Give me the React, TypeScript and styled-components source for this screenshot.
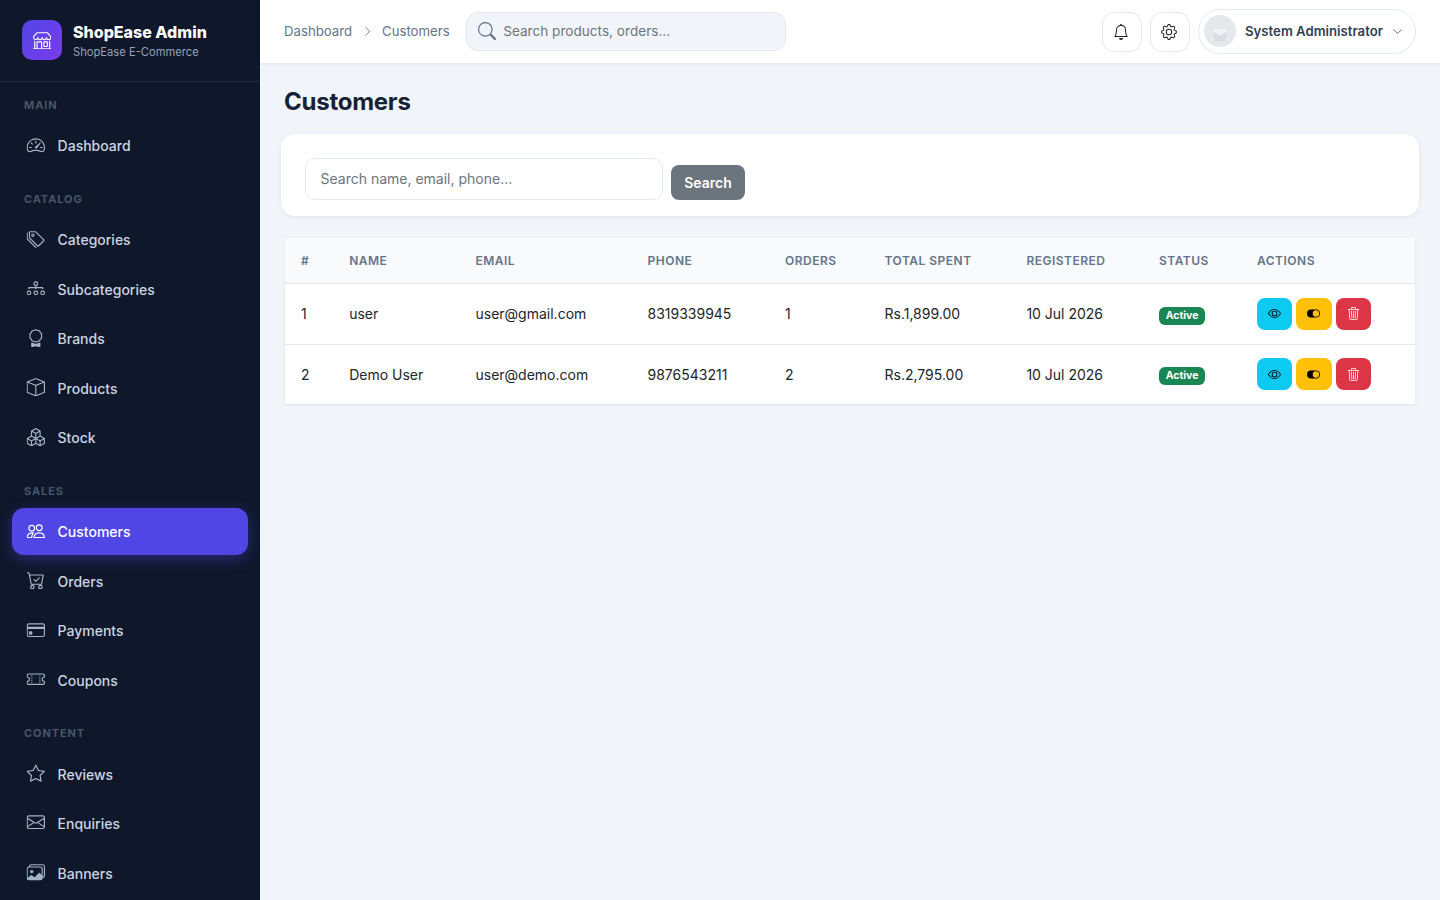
import React from 'react'
import styled, { createGlobalStyle } from 'styled-components'
import {
  BsShop, BsSpeedometer2, BsTags, BsDiagram3, BsAward, BsBox, BsBoxes, BsPeople,
  BsCartCheck, BsCreditCard, BsTicketPerforated, BsStar, BsEnvelope, BsImages,
  BsBell, BsGear, BsChevronDown, BsChevronRight, BsSearch, BsEye, BsToggleOn, BsTrash3,
} from 'react-icons/bs'

const GlobalStyle = createGlobalStyle`
  * { box-sizing: border-box; }
  html, body { margin: 0; height: 100%; overflow: hidden; }
  body {
    font-family: Inter, "Liberation Sans", sans-serif;
    background: #f1f5f9;
    color: #212529;
  }
`

const Shell = styled.div`
  display: flex;
  width: 1440px;
  height: 900px;
  overflow: hidden;
`

const Sidebar = styled.aside`
  flex: 0 0 260px;
  height: 900px;
  overflow: hidden;
  background: #0f172a;
`

const Brand = styled.div`
  display: flex;
  align-items: center;
  gap: 11px;
  height: 82px;
  padding: 0 22px 1px;
  border-bottom: 1px solid #1e293b;
`

const LogoMark = styled.div`
  display: flex;
  align-items: center;
  justify-content: center;
  width: 40px;
  height: 40px;
  border-radius: 10px;
  background: linear-gradient(135deg, #4f46e5, #7c3aed);
  color: #fff;
  font-size: 18.4px;
`

const BrandName = styled.div`
  margin-top: 1px;
  font-size: 16px;
  line-height: 20px;
  font-weight: 800;
  color: #fff;
`

const BrandSub = styled.div`
  font-size: 11.2px;
  line-height: 16px;
  margin-top: 2px;
  color: #94a3b8;
`

const Nav = styled.nav`
  padding: 16px 12px 0;
`

const SectionLabel = styled.div`
  height: 15.7px;
  margin: 0 12px 8.3px;
  font-size: 11px;
  line-height: 15.7px;
  font-weight: 700;
  letter-spacing: 0.9px;
  text-transform: uppercase;
  color: #475569;
`

const NavSection = styled.div`
  margin-bottom: 22.5px;
`

const NavItem = styled.a<{ $active?: boolean }>`
  display: flex;
  align-items: center;
  gap: 12.8px;
  height: 47.5px;
  margin-bottom: 2px;
  padding: 0 14.4px;
  border-radius: 12px;
  font-size: 14px;
  font-weight: 500;
  color: ${p => (p.$active ? '#fff' : '#cbd5e1')};
  background: ${p => (p.$active ? '#4f46e5' : 'transparent')};
  box-shadow: ${p => (p.$active ? '0 4px 15px rgba(79, 70, 229, 0.4)' : 'none')};
  svg {
    flex: 0 0 18.4px;
    width: 18.4px;
    height: 18.4px;
    color: ${p => (p.$active ? '#fff' : '#a3b3c9')};
    transform: translate(0.6px, -1px);
  }
`

const Main = styled.main`
  flex: 1;
  min-width: 0;
`

const Topbar = styled.header`
  display: flex;
  align-items: center;
  height: 63px;
  padding: 0 24px;
  background: #fff;
  box-shadow: 0 1px 3px rgba(15, 23, 42, 0.08);
`

const Crumbs = styled.div`
  display: flex;
  align-items: center;
  gap: 8.5px;
  padding-bottom: 1px;
  font-size: 13.2px;
  color: #64748b;
  svg { width: 11px; height: 11px; margin: 0 1px; }
`

const TopSearch = styled.div`
  display: flex;
  align-items: center;
  gap: 7px;
  width: 320px;
  height: 39px;
  margin-left: 16.5px;
  padding: 0 11px 1px;
  border: 1px solid #e2e8f0;
  border-radius: 12px;
  background: #f1f5f9;
  font-size: 13.6px;
  color: #6c757d;
  svg { width: 18px; height: 18px; color: #64748b; }
`

const TopActions = styled.div`
  display: flex;
  align-items: center;
  gap: 8px;
  margin-left: auto;
`

const IconButton = styled.button`
  display: flex;
  align-items: center;
  justify-content: center;
  width: 40px;
  height: 40px;
  padding: 0 2px 0 0;
  border: 1px solid #e2e8f0;
  border-radius: 12px;
  background: #fff;
  color: #212529;
  font-size: 16px;
`

const Profile = styled.div`
  display: flex;
  align-items: center;
  width: 218px;
  height: 45px;
  padding: 0 12px 1px 5px;
  border: 1px solid #e2e8f0;
  border-radius: 23px;
  font-size: 13.2px;
  font-weight: 600;
  color: #334155;
  svg.chev { width: 11px; height: 11px; margin-left: auto; color: #64748b; }
`

const Avatar = styled.div`
  display: flex;
  align-items: flex-end;
  justify-content: center;
  width: 32px;
  height: 32px;
  margin-right: 9px;
  padding-bottom: 6px;
  border-radius: 50%;
  background: #e5e7eb;
`

const Content = styled.div`
  padding: 24px;
`

const PageTitle = styled.h1`
  margin: 0 0 18px;
  font-size: 24px;
  line-height: 29px;
  font-weight: 700;
  letter-spacing: -0.25px;
  color: #172136;
`

const FilterCard = styled.form`
  display: flex;
  align-items: flex-end;
  gap: 8px;
  height: 82px;
  margin: 0 -3px 22px;
  padding: 24px 24px 16px;
  border-radius: 14px;
  background: #fff;
  box-shadow: 0 1px 4px rgba(15, 23, 42, 0.08);
`

const FilterInput = styled.div`
  display: flex;
  align-items: center;
  width: 358px;
  height: 42px;
  padding: 0 15px 1px 14.5px;
  border: 1px solid #e2e8f0;
  border-radius: 10px;
  font-size: 14px;
  color: #6c757d;
`

const SearchButton = styled.button`
  width: 74px;
  height: 35px;
  padding: 0;
  border: 0;
  border-radius: 8px;
  background: #6c757d;
  color: #fff;
  font: 600 14px Inter, sans-serif;
`

const TableWrap = styled.div`
  margin: 0 1px;
  background: #fff;
  box-shadow: 0 1px 3px rgba(15, 23, 42, 0.08);
`

const Table = styled.table`
  width: 100%;
  table-layout: fixed;
  border-collapse: collapse;
  font-size: 14px;
`

const Th = styled.th`
  height: 45.5px;
  padding: 0 16px;
  border-bottom: 1px solid #e2e8f0;
  background: #f8fafc;
  text-align: left;
  font-size: 12px;
  font-weight: 600;
  letter-spacing: 0.5px;
  text-transform: uppercase;
  color: #64748b;
`

const Td = styled.td`
  height: 60.5px;
  padding: 0 16px;
  border-bottom: 1px solid #e2e8f0;
  color: #212529;
  tr:last-child & { height: 59.5px; border-bottom: 0; }
`

const Badge = styled.span`
  display: inline-block;
  vertical-align: -2px;
  padding: 3px 6.7px;
  border-radius: 6px;
  background: #198754;
  color: #fff;
  font-size: 10.5px;
  line-height: 12px;
  font-weight: 700;
`

const Actions = styled.div`
  display: flex;
  gap: 4px;
`

const ActionButton = styled.button<{ $bg: string; $fg: string }>`
  display: flex;
  align-items: center;
  justify-content: center;
  width: 35.3px;
  height: 32.5px;
  padding: 0;
  border: 0;
  border-radius: 8px;
  background: ${p => p.$bg};
  color: ${p => p.$fg};
  font-size: 13px;
`

const sections = [
  { label: 'Main', items: [{ name: 'Dashboard', Icon: BsSpeedometer2 }] },
  {
    label: 'Catalog',
    items: [
      { name: 'Categories', Icon: BsTags },
      { name: 'Subcategories', Icon: BsDiagram3 },
      { name: 'Brands', Icon: BsAward },
      { name: 'Products', Icon: BsBox },
      { name: 'Stock', Icon: BsBoxes },
    ],
  },
  {
    label: 'Sales',
    items: [
      { name: 'Customers', Icon: BsPeople, active: true },
      { name: 'Orders', Icon: BsCartCheck },
      { name: 'Payments', Icon: BsCreditCard },
      { name: 'Coupons', Icon: BsTicketPerforated },
    ],
  },
  {
    label: 'Content',
    items: [
      { name: 'Reviews', Icon: BsStar },
      { name: 'Enquiries', Icon: BsEnvelope },
      { name: 'Banners', Icon: BsImages },
    ],
  },
]

const columns = [
  ['#', 48.2], ['Name', 126.3], ['Email', 172], ['Phone', 137.5], ['Orders', 99.5],
  ['Total Spent', 141.9], ['Registered', 132.6], ['Status', 98], ['Actions', 174],
] as const

const customers = [
  { id: 1, name: 'user', email: 'user@gmail.com', phone: '8319339945', orders: 1, total: 'Rs.1,899.00', date: '10 Jul 2026' },
  { id: 2, name: 'Demo User', email: 'user@demo.com', phone: '9876543211', orders: 2, total: 'Rs.2,795.00', date: '10 Jul 2026' },
]

export default function App() {
  return (
    <Shell>
      <GlobalStyle />
      <Sidebar>
        <Brand>
          <LogoMark><BsShop /></LogoMark>
          <div>
            <BrandName>ShopEase Admin</BrandName>
            <BrandSub>ShopEase E-Commerce</BrandSub>
          </div>
        </Brand>
        <Nav>
          {sections.map(section => (
            <NavSection key={section.label}>
              <SectionLabel>{section.label}</SectionLabel>
              {section.items.map(({ name, Icon, active }: any) => (
                <NavItem key={name} $active={active}>
                  <Icon />
                  {name}
                </NavItem>
              ))}
            </NavSection>
          ))}
        </Nav>
      </Sidebar>
      <Main>
        <Topbar>
          <Crumbs>
            <span>Dashboard</span>
            <BsChevronRight />
            <span>Customers</span>
          </Crumbs>
          <TopSearch>
            <BsSearch />
            <span>Search products, orders...</span>
          </TopSearch>
          <TopActions>
            <IconButton><BsBell /></IconButton>
            <IconButton><BsGear /></IconButton>
            <Profile>
              <Avatar>
                <svg width="12" height="12" viewBox="0 0 12 12">
                  <rect width="12" height="12" fill="#eef0f3" />
                  <path d="M0 3l6 4 6-4v9H0z" fill="#d9dde3" />
                </svg>
              </Avatar>
              System Administrator
              <BsChevronDown className="chev" />
            </Profile>
          </TopActions>
        </Topbar>
        <Content>
          <PageTitle>Customers</PageTitle>
          <FilterCard>
            <FilterInput>Search name, email, phone...</FilterInput>
            <SearchButton type="button">Search</SearchButton>
          </FilterCard>
          <TableWrap>
            <Table>
              <colgroup>
                {columns.map(([label, width]) => <col key={label} width={width} />)}
              </colgroup>
              <thead>
                <tr>{columns.map(([label]) => <Th key={label}>{label}</Th>)}</tr>
              </thead>
              <tbody>
                {customers.map(c => (
                  <tr key={c.id}>
                    <Td>{c.id}</Td>
                    <Td>{c.name}</Td>
                    <Td>{c.email}</Td>
                    <Td>{c.phone}</Td>
                    <Td>{c.orders}</Td>
                    <Td>{c.total}</Td>
                    <Td>{c.date}</Td>
                    <Td><Badge>Active</Badge></Td>
                    <Td>
                      <Actions>
                        <ActionButton $bg="#0dcaf0" $fg="#000"><BsEye /></ActionButton>
                        <ActionButton $bg="#ffc107" $fg="#000"><BsToggleOn /></ActionButton>
                        <ActionButton $bg="#dc3545" $fg="#fff"><BsTrash3 /></ActionButton>
                      </Actions>
                    </Td>
                  </tr>
                ))}
              </tbody>
            </Table>
          </TableWrap>
        </Content>
      </Main>
    </Shell>
  )
}
